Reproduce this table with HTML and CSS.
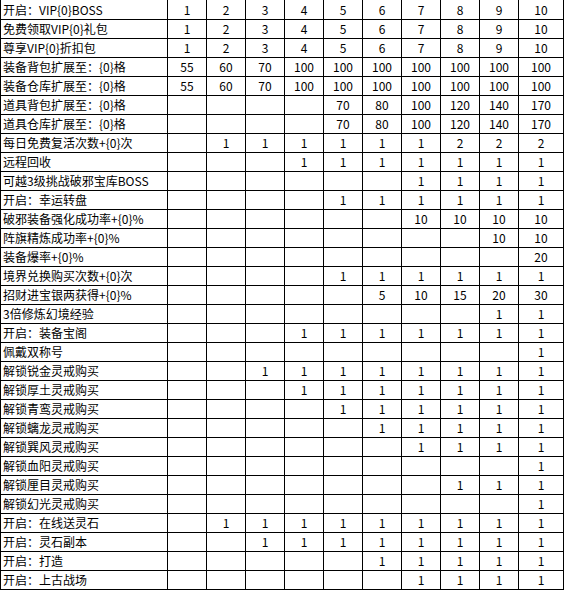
FILE: index.html
```html
<!DOCTYPE html>
<html>
<head>
<meta charset="utf-8">
<link rel="stylesheet" href="styles.css">
</head>
<body>
<table class="vip">
<colgroup>
<col class="c-name"><col class="c-n"><col class="c-n"><col class="c-n"><col class="c-n"><col class="c-n"><col class="c-n"><col class="c-n"><col class="c-n"><col class="c-n"><col class="c-last">
</colgroup>
<tbody id="rows"></tbody>
</table>
<script>
var data = [
["开启：VIP{0}BOSS",["1","2","3","4","5","6","7","8","9","10"]],
["免费领取VIP{0}礼包",["1","2","3","4","5","6","7","8","9","10"]],
["尊享VIP{0}折扣包",["1","2","3","4","5","6","7","8","9","10"]],
["装备背包扩展至：{0}格",["55","60","70","100","100","100","100","100","100","100"]],
["装备仓库扩展至：{0}格",["55","60","70","100","100","100","100","100","100","100"]],
["道具背包扩展至：{0}格",["","","","","70","80","100","120","140","170"]],
["道具仓库扩展至：{0}格",["","","","","70","80","100","120","140","170"]],
["每日免费复活次数+{0}次",["","1","1","1","1","1","1","2","2","2"]],
["远程回收",["","","","1","1","1","1","1","1","1"]],
["可越3级挑战破邪宝库BOSS",["","","","","","","1","1","1","1"]],
["开启：幸运转盘",["","","","","1","1","1","1","1","1"]],
["破邪装备强化成功率+{0}%",["","","","","","","10","10","10","10"]],
["阵旗精炼成功率+{0}%",["","","","","","","","","10","10"]],
["装备爆率+{0}%",["","","","","","","","","","20"]],
["境界兑换购买次数+{0}次",["","","","","1","1","1","1","1","1"]],
["招财进宝银两获得+{0}%",["","","","","","5","10","15","20","30"]],
["3倍修炼幻境经验",["","","","","","","","","1","1"]],
["开启：装备宝阁",["","","","1","1","1","1","1","1","1"]],
["佩戴双称号",["","","","","","","","","","1"]],
["解锁锐金灵戒购买",["","","1","1","1","1","1","1","1","1"]],
["解锁厚土灵戒购买",["","","","1","1","1","1","1","1","1"]],
["解锁青鸾灵戒购买",["","","","","1","1","1","1","1","1"]],
["解锁螭龙灵戒购买",["","","","","","1","1","1","1","1"]],
["解锁巽风灵戒购买",["","","","","","","1","1","1","1"]],
["解锁血阳灵戒购买",["","","","","","","","","","1"]],
["解锁厘目灵戒购买",["","","","","","","","1","1","1"]],
["解锁幻光灵戒购买",["","","","","","","","","","1"]],
["开启：在线送灵石",["","1","1","1","1","1","1","1","1","1"]],
["开启：灵石副本",["","","1","1","1","1","1","1","1","1"]],
["开启：打造",["","","","","","1","1","1","1","1"]],
["开启：上古战场",["","","","","","","1","1","1","1"]]
];
var tb = document.getElementById("rows");
data.forEach(function(r){
  var tr = document.createElement("tr");
  var th = document.createElement("td");
  th.className = "name";
  th.textContent = r[0];
  tr.appendChild(th);
  r[1].forEach(function(v){
    var td = document.createElement("td");
    td.className = "num";
    td.textContent = v;
    tr.appendChild(td);
  });
  tb.appendChild(tr);
});
</script>
</body>
</html>
```
FILE: styles.css
```css
html, body {
  margin: 0;
  padding: 0;
  background: #ffffff;
}
.vip {
  border-collapse: collapse;
  table-layout: fixed;
  width: 564px;
  font-family: "Noto Sans CJK SC", "Noto Sans", sans-serif;
  font-size: 12px;
  color: #000000;
}
.c-name { width: 167px; }
.c-n { width: 39px; }
.c-last { width: 45px; }
.vip td {
  border: 1px solid #000000;
  padding: 0;
  height: 18px;
  line-height: 18px;
  white-space: nowrap;
  overflow: hidden;
}
.vip tr:first-child td {
  border-top: 0;
  height: 19px;
}
.vip td.name {
  text-align: left;
  padding-left: 2px;
}
.vip td.num {
  text-align: center;
}
```
